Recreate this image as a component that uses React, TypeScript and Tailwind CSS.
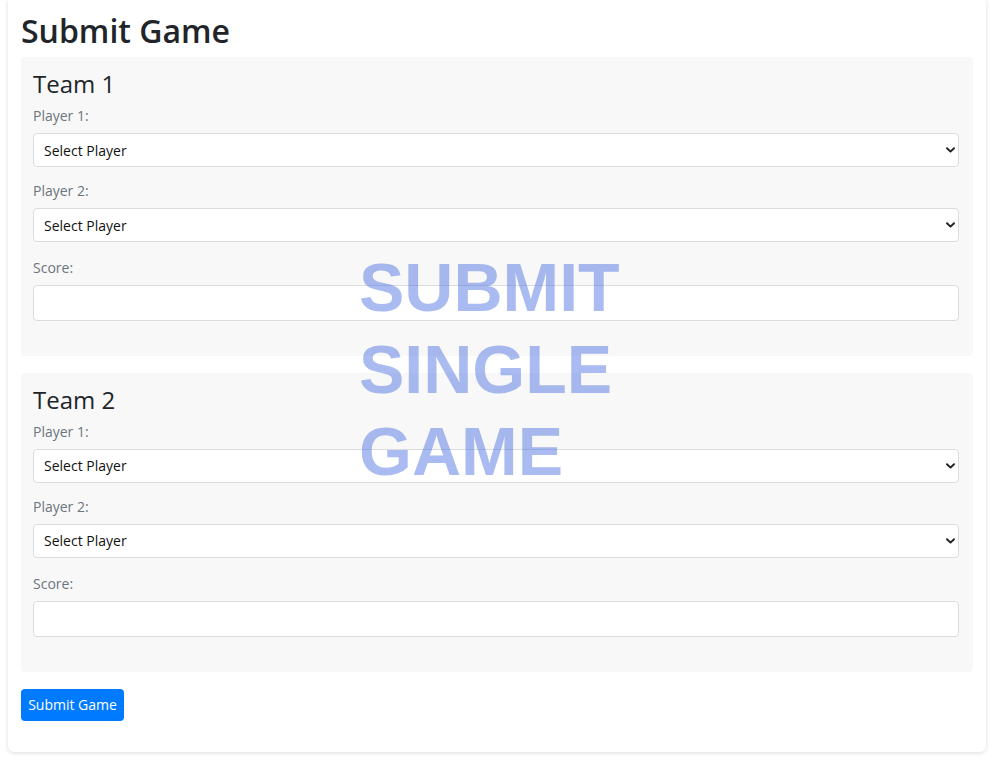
import React from 'react';

const FONT = { fontFamily: '"Open Sans", "Noto Sans", sans-serif' };

const Chevron = () => (
  <svg className="absolute right-[4px] top-1/2 -translate-y-1/2 pointer-events-none" width="9" height="6" viewBox="0 0 9 6">
    <path d="M1 1.2 L4.5 4.6 L8 1.2" fill="none" stroke="#222" strokeWidth="1.9" strokeLinecap="round" strokeLinejoin="round" />
  </svg>
);

const PlayerSelect: React.FC<{ label: string }> = ({ label }) => (
  <div>
    <label className="block text-[14px] leading-[21px] text-[#6c757d] mb-[7px] pt-px">{label}</label>
    <div className="relative">
      <select
        className="appearance-none block w-full h-[34px] bg-white border border-[#dadcdf] rounded-[4px] pl-[10px] pr-8 text-[14px] text-[#111] outline-none"
        style={FONT}
        defaultValue=""
      >
        <option value="">Select Player</option>
      </select>
      <Chevron />
    </div>
  </div>
);

const TeamPanel: React.FC<{ name: string }> = ({ name }) => (
  <section className="bg-[#f8f8f8] rounded-[4px] pt-[13px] pl-[12px] pr-[14px] pb-[35px]">
    <h2 className="text-[24px] leading-[1.2] text-[#212529] mb-[5px]">{name}</h2>
    <PlayerSelect label="Player 1:" />
    <div className="h-[12px]" />
    <PlayerSelect label="Player 2:" />
    <div className="h-[14px]" />
    <div>
      <label className="block text-[14px] leading-[21px] text-[#6c757d] mb-[7px] pt-px">Score:</label>
      <input
        type="text"
        className="block w-full h-[36px] bg-white border border-[#dadcdf] rounded-[4px] px-[10px] text-[14px] outline-none"
        style={FONT}
      />
    </div>
  </section>
);

export default function App() {
  return (
    <div className="min-h-screen bg-white" style={FONT}>
      <div className="relative ml-2 w-[978px] bg-white rounded-b-[6px] shadow-[0_1px_4px_rgba(0,0,0,0.14)] px-[13px] pt-[12px] pb-[31px]">
        <h1 className="text-[32px] leading-[1.2] font-semibold text-[#212529] mb-[7px]">Submit Game</h1>
        <div className="flex flex-col gap-[17px]">
          <TeamPanel name="Team 1" />
          <TeamPanel name="Team 2" />
        </div>
        <button
          type="button"
          className="mt-[17px] w-[103px] h-[32px] rounded-[4px] bg-[#007bff] text-white text-[14px] flex items-center justify-center"
        >
          Submit Game
        </button>

        <div
          className="absolute left-[351px] top-[246px] text-[68px] leading-[82px] font-bold text-[rgba(65,105,225,0.45)] pointer-events-none"
          style={{ fontFamily: '"Liberation Sans", Arial, sans-serif' }}
        >
          SUBMIT
          <br />
          SINGLE
          <br />
          GAME
        </div>
      </div>
    </div>
  );
}
